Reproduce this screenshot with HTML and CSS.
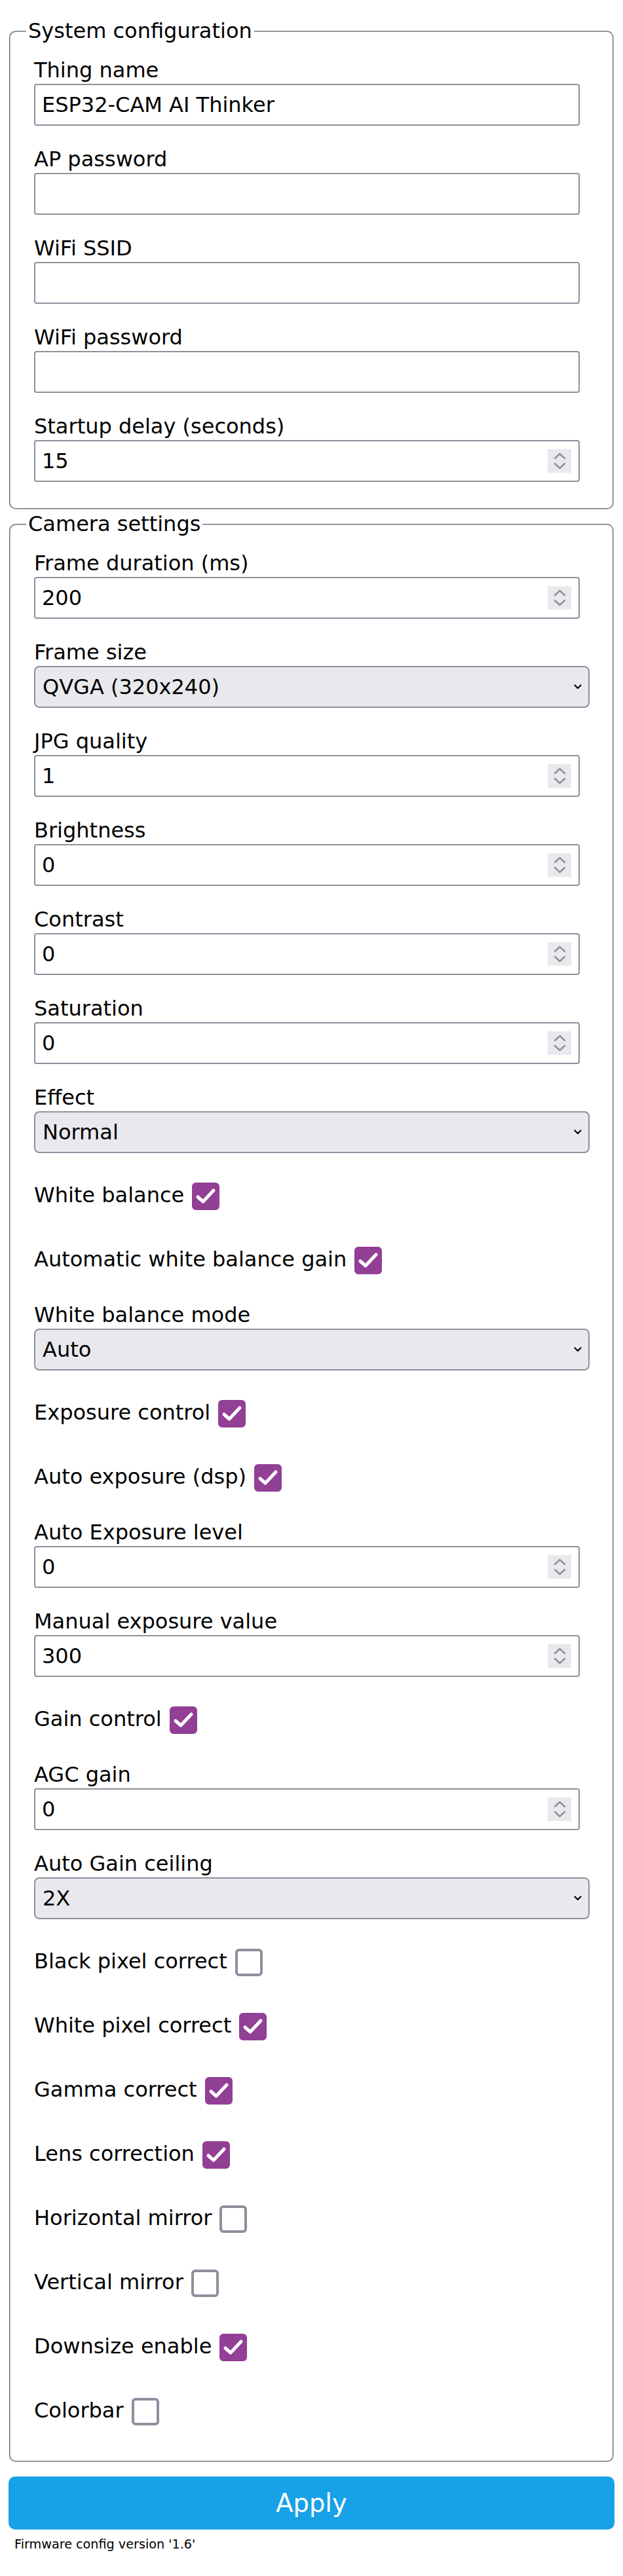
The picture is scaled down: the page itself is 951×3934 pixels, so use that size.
FILE: index.html
```html
<!DOCTYPE html>
<html lang="en">
<head>
<meta charset="utf-8">
<title>ESP32-CAM AI Thinker</title>
<link rel="stylesheet" href="styles.css">
</head>
<body>
<form class="page" action="" method="post">
  <fieldset class="group">
    <legend>System configuration</legend>
    <div class="field">
      <label for="iwcThingName">Thing name</label>
      <input class="text" id="iwcThingName" name="iwcThingName" type="text" value="ESP32-CAM AI Thinker">
    </div>
    <div class="field">
      <label for="iwcApPassword">AP password</label>
      <input class="text" id="iwcApPassword" name="iwcApPassword" type="password" value="">
    </div>
    <div class="field">
      <label for="iwcWifiSsid">WiFi SSID</label>
      <input class="text" id="iwcWifiSsid" name="iwcWifiSsid" type="text" value="">
    </div>
    <div class="field">
      <label for="iwcWifiPassword">WiFi password</label>
      <input class="text" id="iwcWifiPassword" name="iwcWifiPassword" type="password" value="">
    </div>
    <div class="field">
      <label for="startupDelay">Startup delay (seconds)</label>
      <div class="num">
        <input class="text" id="startupDelay" name="startupDelay" type="text" inputmode="numeric" value="15">
        <span class="spin" aria-hidden="true"><svg viewBox="0 0 36 36" width="36" height="36"><polyline points="11,14 18.5,7 26,14"/><polyline points="11,22 18.5,29 26,22"/></svg></span>
      </div>
    </div>
  </fieldset>

  <fieldset class="group group--camera">
    <legend>Camera settings</legend>
    <div class="field">
      <label for="frameDuration">Frame duration (ms)</label>
      <div class="num">
        <input class="text" id="frameDuration" name="frameDuration" type="text" inputmode="numeric" value="200">
        <span class="spin" aria-hidden="true"><svg viewBox="0 0 36 36" width="36" height="36"><polyline points="11,14 18.5,7 26,14"/><polyline points="11,22 18.5,29 26,22"/></svg></span>
      </div>
    </div>
    <div class="field">
      <label for="frameSize">Frame size</label>
      <div class="sel">
        <select id="frameSize" name="frameSize">
          <option>QVGA (320x240)</option>
        </select>
        <svg class="chev" viewBox="0 0 12 8" width="12" height="8" aria-hidden="true"><polyline points="1.5,1.5 6,6 10.5,1.5"/></svg>
      </div>
    </div>
    <div class="field">
      <label for="jpgQuality">JPG quality</label>
      <div class="num">
        <input class="text" id="jpgQuality" name="jpgQuality" type="text" inputmode="numeric" value="1">
        <span class="spin" aria-hidden="true"><svg viewBox="0 0 36 36" width="36" height="36"><polyline points="11,14 18.5,7 26,14"/><polyline points="11,22 18.5,29 26,22"/></svg></span>
      </div>
    </div>
    <div class="field">
      <label for="brightness">Brightness</label>
      <div class="num">
        <input class="text" id="brightness" name="brightness" type="text" inputmode="numeric" value="0">
        <span class="spin" aria-hidden="true"><svg viewBox="0 0 36 36" width="36" height="36"><polyline points="11,14 18.5,7 26,14"/><polyline points="11,22 18.5,29 26,22"/></svg></span>
      </div>
    </div>
    <div class="field">
      <label for="contrast">Contrast</label>
      <div class="num">
        <input class="text" id="contrast" name="contrast" type="text" inputmode="numeric" value="0">
        <span class="spin" aria-hidden="true"><svg viewBox="0 0 36 36" width="36" height="36"><polyline points="11,14 18.5,7 26,14"/><polyline points="11,22 18.5,29 26,22"/></svg></span>
      </div>
    </div>
    <div class="field">
      <label for="saturation">Saturation</label>
      <div class="num">
        <input class="text" id="saturation" name="saturation" type="text" inputmode="numeric" value="0">
        <span class="spin" aria-hidden="true"><svg viewBox="0 0 36 36" width="36" height="36"><polyline points="11,14 18.5,7 26,14"/><polyline points="11,22 18.5,29 26,22"/></svg></span>
      </div>
    </div>
    <div class="field">
      <label for="effect">Effect</label>
      <div class="sel">
        <select id="effect" name="effect">
          <option>Normal</option>
        </select>
        <svg class="chev" viewBox="0 0 12 8" width="12" height="8" aria-hidden="true"><polyline points="1.5,1.5 6,6 10.5,1.5"/></svg>
      </div>
    </div>
    <label class="check"><span class="ctext">White balance</span><input type="checkbox" name="whiteBalance" checked><span class="box"><svg viewBox="0 0 34 34" width="34" height="34"><polyline points="5,18 13,25 29,8"/></svg></span></label>
    <label class="check"><span class="ctext">Automatic white balance gain</span><input type="checkbox" name="awbGain" checked><span class="box"><svg viewBox="0 0 34 34" width="34" height="34"><polyline points="5,18 13,25 29,8"/></svg></span></label>
    <div class="field">
      <label for="wbMode">White balance mode</label>
      <div class="sel">
        <select id="wbMode" name="wbMode">
          <option>Auto</option>
        </select>
        <svg class="chev" viewBox="0 0 12 8" width="12" height="8" aria-hidden="true"><polyline points="1.5,1.5 6,6 10.5,1.5"/></svg>
      </div>
    </div>
    <label class="check"><span class="ctext">Exposure control</span><input type="checkbox" name="exposureCtrl" checked><span class="box"><svg viewBox="0 0 34 34" width="34" height="34"><polyline points="5,18 13,25 29,8"/></svg></span></label>
    <label class="check"><span class="ctext">Auto exposure (dsp)</span><input type="checkbox" name="aecDsp" checked><span class="box"><svg viewBox="0 0 34 34" width="34" height="34"><polyline points="5,18 13,25 29,8"/></svg></span></label>
    <div class="field">
      <label for="aeLevel">Auto Exposure level</label>
      <div class="num">
        <input class="text" id="aeLevel" name="aeLevel" type="text" inputmode="numeric" value="0">
        <span class="spin" aria-hidden="true"><svg viewBox="0 0 36 36" width="36" height="36"><polyline points="11,14 18.5,7 26,14"/><polyline points="11,22 18.5,29 26,22"/></svg></span>
      </div>
    </div>
    <div class="field">
      <label for="aecValue">Manual exposure value</label>
      <div class="num">
        <input class="text" id="aecValue" name="aecValue" type="text" inputmode="numeric" value="300">
        <span class="spin" aria-hidden="true"><svg viewBox="0 0 36 36" width="36" height="36"><polyline points="11,14 18.5,7 26,14"/><polyline points="11,22 18.5,29 26,22"/></svg></span>
      </div>
    </div>
    <label class="check"><span class="ctext">Gain control</span><input type="checkbox" name="gainCtrl" checked><span class="box"><svg viewBox="0 0 34 34" width="34" height="34"><polyline points="5,18 13,25 29,8"/></svg></span></label>
    <div class="field">
      <label for="agcGain">AGC gain</label>
      <div class="num">
        <input class="text" id="agcGain" name="agcGain" type="text" inputmode="numeric" value="0">
        <span class="spin" aria-hidden="true"><svg viewBox="0 0 36 36" width="36" height="36"><polyline points="11,14 18.5,7 26,14"/><polyline points="11,22 18.5,29 26,22"/></svg></span>
      </div>
    </div>
    <div class="field">
      <label for="gainCeiling">Auto Gain ceiling</label>
      <div class="sel">
        <select id="gainCeiling" name="gainCeiling">
          <option>2X</option>
        </select>
        <svg class="chev" viewBox="0 0 12 8" width="12" height="8" aria-hidden="true"><polyline points="1.5,1.5 6,6 10.5,1.5"/></svg>
      </div>
    </div>
    <label class="check"><span class="ctext">Black pixel correct</span><input type="checkbox" name="bpc"><span class="box"><svg viewBox="0 0 34 34" width="34" height="34"><polyline points="5,18 13,25 29,8"/></svg></span></label>
    <label class="check"><span class="ctext">White pixel correct</span><input type="checkbox" name="wpc" checked><span class="box"><svg viewBox="0 0 34 34" width="34" height="34"><polyline points="5,18 13,25 29,8"/></svg></span></label>
    <label class="check"><span class="ctext">Gamma correct</span><input type="checkbox" name="rawGma" checked><span class="box"><svg viewBox="0 0 34 34" width="34" height="34"><polyline points="5,18 13,25 29,8"/></svg></span></label>
    <label class="check"><span class="ctext">Lens correction</span><input type="checkbox" name="lenc" checked><span class="box"><svg viewBox="0 0 34 34" width="34" height="34"><polyline points="5,18 13,25 29,8"/></svg></span></label>
    <label class="check"><span class="ctext">Horizontal mirror</span><input type="checkbox" name="hmirror"><span class="box"><svg viewBox="0 0 34 34" width="34" height="34"><polyline points="5,18 13,25 29,8"/></svg></span></label>
    <label class="check"><span class="ctext">Vertical mirror</span><input type="checkbox" name="vflip"><span class="box"><svg viewBox="0 0 34 34" width="34" height="34"><polyline points="5,18 13,25 29,8"/></svg></span></label>
    <label class="check"><span class="ctext">Downsize enable</span><input type="checkbox" name="dcw" checked><span class="box"><svg viewBox="0 0 34 34" width="34" height="34"><polyline points="5,18 13,25 29,8"/></svg></span></label>
    <label class="check"><span class="ctext">Colorbar</span><input type="checkbox" name="colorbar"><span class="box"><svg viewBox="0 0 34 34" width="34" height="34"><polyline points="5,18 13,25 29,8"/></svg></span></label>
  </fieldset>

  <button class="apply" type="submit">Apply</button>
  <div class="version">Firmware config version '1.6'</div>
</form>
</body>
</html>
```

FILE: styles.css
```css
* {
  box-sizing: border-box;
}

html,
body {
  margin: 0;
  background: #fff;
}

body {
  font-family: "DejaVu Sans", Verdana, sans-serif;
  font-size: 32px;
  color: #000;
}

.page {
  margin: 0;
  padding: 29px 13px 0;
}

.group {
  min-width: 0;
  margin: 0 1px;
  padding: 6px 0 24px 24px;
  border: 2px groove #c0c0c0;
  border-radius: 10px;
}

.group + .group {
  margin-top: 4px;
}

.group--camera {
  padding-bottom: 27px;
}

legend {
  padding: 0 3px;
  font-size: 32px;
  line-height: 37px;
}

.field {
  padding: 17px 12px 16px;
}

.field > label {
  display: block;
  line-height: 37px;
  margin-bottom: 2px;
}

.text {
  display: block;
  width: 833px;
  height: 64px;
  margin: 0;
  padding: 0 10px;
  border: 2px solid #8f8f9d;
  border-radius: 4px;
  background: #fff;
  font: inherit;
  color: #000;
  outline: none;
}

.num {
  position: relative;
  width: 833px;
}

.num .text {
  width: 100%;
}

.spin {
  position: absolute;
  top: 14px;
  right: 13px;
  width: 36px;
  height: 36px;
  background: #e9e9ed;
}

.spin svg {
  display: block;
  fill: none;
  stroke: #8f8f9d;
  stroke-width: 2.4;
  stroke-linecap: round;
  stroke-linejoin: round;
}

.sel {
  position: relative;
  width: 848px;
}

.sel select {
  -webkit-appearance: none;
  appearance: none;
  display: block;
  width: 100%;
  height: 64px;
  margin: 0;
  padding: 0 40px 0 11px;
  border: 2px solid #8f8f9d;
  border-radius: 8px;
  background: #e9e9ed;
  font: inherit;
  color: #000;
  outline: none;
}

.chev {
  position: absolute;
  top: 28px;
  right: 12px;
  fill: none;
  stroke: #000;
  stroke-width: 2.2;
  stroke-linecap: round;
  stroke-linejoin: round;
  pointer-events: none;
}

.check {
  display: flex;
  align-items: center;
  height: 98px;
  padding: 29px 12px 27px;
  cursor: pointer;
}

.ctext {
  line-height: 37px;
  margin-bottom: 4px;
}

.check input {
  position: absolute;
  width: 1px;
  height: 1px;
  margin: 0;
  opacity: 0;
}

.box {
  display: flex;
  align-items: center;
  justify-content: center;
  flex: none;
  width: 42px;
  height: 42px;
  margin-left: 12px;
  border: 4px solid #8f8f9d;
  border-radius: 6px;
  background: #fff;
}

.box svg {
  display: none;
  fill: none;
  stroke: #fff;
  stroke-width: 5;
  stroke-linecap: round;
  stroke-linejoin: round;
}

.check input:checked + .box {
  background: #923f96;
  border-color: #923f96;
}

.check input:checked + .box svg {
  display: block;
}

.apply {
  display: block;
  width: 100%;
  height: 81px;
  margin: 22px 0 0;
  padding: 0;
  border: 0;
  border-radius: 10px;
  background: #17a1e6;
  color: #fff;
  font-family: inherit;
  font-size: 38.4px;
  line-height: 81px;
  text-align: center;
  cursor: pointer;
}

.version {
  padding: 12px 9px 0;
  font-size: 19.2px;
  line-height: 22px;
}
```
